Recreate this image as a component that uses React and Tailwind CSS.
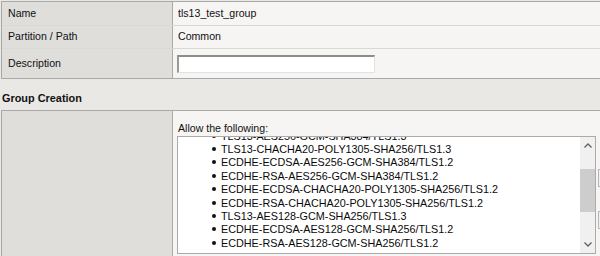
export default function App() {
  const items = [
    "TLS13-AES256-GCM-SHA384/TLS1.3",
    "TLS13-CHACHA20-POLY1305-SHA256/TLS1.3",
    "ECDHE-ECDSA-AES256-GCM-SHA384/TLS1.2",
    "ECDHE-RSA-AES256-GCM-SHA384/TLS1.2",
    "ECDHE-ECDSA-CHACHA20-POLY1305-SHA256/TLS1.2",
    "ECDHE-RSA-CHACHA20-POLY1305-SHA256/TLS1.2",
    "TLS13-AES128-GCM-SHA256/TLS1.3",
    "ECDHE-ECDSA-AES128-GCM-SHA256/TLS1.2",
    "ECDHE-RSA-AES128-GCM-SHA256/TLS1.2",
  ];
  return (
    <div
      className="w-[600px] h-[256px] overflow-hidden bg-[#e9e8e4] pt-[1px] pl-[1px] text-[10.6px] text-[#111]"
      style={{ fontFamily: '"Liberation Sans", Arial, sans-serif' }}
    >
      {/* top table */}
      <div className="border-t border-l border-b border-[#a9a9a9] w-[600px]">
        <div className="flex h-[24px] border-b border-[#d9d8d4]">
          <div className="w-[171px] shrink-0 border-r border-[#a9a9a9] bg-[#dfdedb] pl-[6px] flex items-center">Name</div>
          <div className="flex-1 bg-[#f6f5f3] pl-[5px] flex items-center">tls13_test_group</div>
        </div>
        <div className="flex h-[23px] border-b border-[#d9d8d4]">
          <div className="w-[171px] shrink-0 border-r border-[#a9a9a9] bg-[#dfdedb] pl-[6px] flex items-center">Partition / Path</div>
          <div className="flex-1 bg-[#f6f5f3] pl-[5px] flex items-center">Common</div>
        </div>
        <div className="flex h-[29px]">
          <div className="w-[171px] shrink-0 border-r border-[#a9a9a9] bg-[#dfdedb] pl-[6px] flex items-center">Description</div>
          <div className="flex-1 bg-[#f6f5f3] pl-[4px] flex items-center">
            <div className="w-[198px] h-[18px] bg-white border-t-2 border-l-2 border-b border-r border-t-[#8c8c8c] border-l-[#9a9a9a] border-b-[#e2e2e2] border-r-[#e2e2e2]" />
          </div>
        </div>
      </div>

      {/* section heading */}
      <div className="h-[31px] flex items-end pb-[4px] pl-[1px] font-bold text-[10.9px] text-[#111]">
        Group Creation
      </div>

      {/* second table */}
      <div className="border-t border-l border-[#a9a9a9] w-[600px] flex h-[150px]">
        <div className="w-[171px] shrink-0 border-r border-[#a9a9a9] bg-[#dfdedb]" />
        <div className="flex-1 bg-[#f6f5f3] pl-[4px] pt-[11px]">
          <div className="pl-[1px] leading-[12px]">Allow the following:</div>
          <div className="flex mt-[2px] gap-[2px]">
            <div className="w-[419px] h-[118px] shrink-0 border border-[#ababab] bg-white flex overflow-hidden">
              <div className="flex-1 overflow-hidden">
                <div className="-mt-[8px]">
                  {items.map((t) => (
                    <div key={t} className="h-[13.4px] flex items-center pl-[34px] text-[10.8px] text-[#0a0a0a]">
                      <span className="w-[4px] h-[4px] rounded-full bg-[#111] mr-[5px] shrink-0" />
                      <span className="whitespace-nowrap">{t}</span>
                    </div>
                  ))}
                </div>
              </div>
              <div className="w-[15px] shrink-0 bg-[#f0f0f0] flex flex-col items-center">
                <div className="h-[17px] flex items-center justify-center">
                  <svg width="8" height="5" viewBox="0 0 8 5"><path d="M0.5 4.5 L4 1 L7.5 4.5" fill="none" stroke="#606060" strokeWidth="1.3" /></svg>
                </div>
                <div className="mt-[15px] w-[15px] h-[43px] bg-[#cdcdcd]" />
                <div className="flex-1" />
                <div className="h-[17px] flex items-center justify-center">
                  <svg width="8" height="5" viewBox="0 0 8 5"><path d="M0.5 0.5 L4 4 L7.5 0.5" fill="none" stroke="#606060" strokeWidth="1.3" /></svg>
                </div>
              </div>
            </div>
            <div className="flex flex-col pt-[33px] gap-[24px]">
              <div className="w-[20px] h-[18px] border border-[#b5b5b5] bg-[#f0f0f0]" />
              <div className="w-[20px] h-[18px] border border-[#b5b5b5] bg-[#f0f0f0]" />
            </div>
          </div>
          <div className="pl-[21px] mt-[1px] leading-[12px]">DHE</div>
        </div>
      </div>
    </div>
  );
}
